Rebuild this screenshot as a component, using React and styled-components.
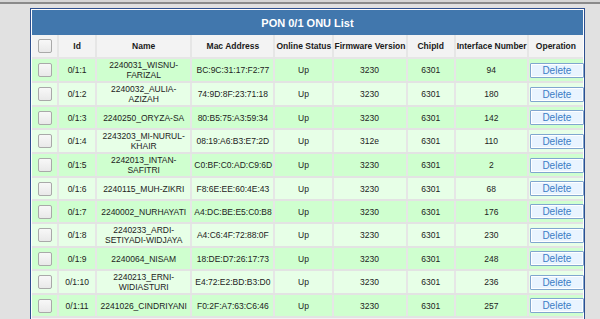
import React from "react"
import styled, { createGlobalStyle } from "styled-components"

const GlobalStyle = createGlobalStyle`
  html, body {
    margin: 0;
    padding: 0;
    background: #e1e1e1;
    font-family: "Liberation Sans", Arial, sans-serif;
    overflow: hidden;
  }
`

const onus = [
  ["0/1:1", "2240031_WISNU-FARIZAL", "BC:9C:31:17:F2:77", "3230", "94"],
  ["0/1:2", "2240032_AULIA-AZIZAH", "74:9D:8F:23:71:18", "3230", "180"],
  ["0/1:3", "2240250_ORYZA-SA", "80:B5:75:A3:59:34", "3230", "142"],
  ["0/1:4", "2243203_MI-NURUL-KHAIR", "08:19:A6:B3:E7:2D", "312e", "110"],
  ["0/1:5", "2242013_INTAN-SAFITRI", "C0:BF:C0:AD:C9:6D", "3230", "2"],
  ["0/1:6", "2240115_MUH-ZIKRI", "F8:6E:EE:60:4E:43", "3230", "68"],
  ["0/1:7", "2240002_NURHAYATI", "A4:DC:BE:E5:C0:B8", "3230", "176"],
  ["0/1:8", "2240233_ARDI-SETIYADI-WIDJAYA", "A4:C6:4F:72:88:0F", "3230", "230"],
  ["0/1:9", "2240064_NISAM", "18:DE:D7:26:17:73", "3230", "248"],
  ["0/1:10", "2240213_ERNI-WIDIASTURI", "E4:72:E2:BD:B3:D0", "3230", "236"],
  ["0/1:11", "2241026_CINDRIYANI", "F0:2F:A7:63:C6:46", "3230", "257"],
]

const widths = [26, 38, 95, 83, 58, 74, 48, 73, 55]
const headers = ["", "Id", "Name", "Mac Address", "Online Status", "Firmware Version", "ChipId", "Interface Number", "Operation"]

const App = () => {
  return (
    <>
      <GlobalStyle />
      <TopBar />
      <Panel>
        <Title>PON 0/1 ONU List</Title>
        <Table>
          <colgroup>
            {widths.map((w, i) => (
              <col key={i} style={{ width: w }} />
            ))}
          </colgroup>
          <thead>
            <tr>
              {headers.map((h, i) => (
                <Th key={i}>{i === 0 ? <Check type="checkbox" /> : h}</Th>
              ))}
            </tr>
          </thead>
          <tbody>
            {onus.map((o, idx) => (
              <Row key={o[0]} $odd={idx % 2 === 0}>
                <Td><Check type="checkbox" /></Td>
                <Td>{o[0]}</Td>
                <Td>{o[1]}</Td>
                <Td>{o[2]}</Td>
                <Td>Up</Td>
                <Td>{o[3]}</Td>
                <Td>6301</Td>
                <Td>{o[4]}</Td>
                <Td $op><DeleteButton>Delete</DeleteButton></Td>
              </Row>
            ))}
          </tbody>
        </Table>
        <Spacer />
      </Panel>
    </>
  )
}

export default App

const TopBar = styled.div`
  height: 2px;
  background: #d6d6d6;
  border-bottom: 2px solid #8a8a8a;
`

const Panel = styled.div`
  margin: 4px 0 0 30px;
  width: 551px;
  border: 1px solid #2d4f8f;
  padding: 1px;
  background: #ffffff;
`

const Title = styled.div`
  height: 25px;
  background: #4177ad;
  color: #ffffff;
  font-size: 11px;
  font-weight: bold;
  display: flex;
  align-items: center;
  justify-content: center;
`

const Table = styled.table`
  width: 551px;
  table-layout: fixed;
  border-collapse: collapse;
  font-size: 8.5px;
  color: #222;
`

const Th = styled.th`
  height: 20px;
  padding: 1px 1px;
  background: #f3f3f3;
  font-weight: bold;
  color: #1a1a1a;
  white-space: nowrap;
  overflow: visible;
  text-align: center;
  border-right: 2px solid #e6e6e6;
  border-bottom: 2px solid #e6e6e6;
  &:last-child {
    border-right: none;
  }
`

const Row = styled.tr`
  background: ${(p) => (p.$odd ? "#cfffcf" : "#e7ffe7")};
`

const Td = styled.td`
  height: 19px;
  padding: ${(p) => (p.$op ? "0 0 0 1px" : "1px 2px")};
  line-height: 10px;
  text-align: center;
  vertical-align: middle;
  border-right: 2px solid #e6e6e6;
  border-bottom: 2px solid #e3e3e3;
  &:last-child {
    border-right: none;
  }
`

const Spacer = styled.div`
  height: 24px;
  background: #f2f2f2;
`

const Check = styled.input`
  appearance: none;
  display: block;
  margin: 0 auto;
  width: 14px;
  height: 14px;
  border: 1px solid #a9a9a9;
  border-radius: 2px;
  background: linear-gradient(#f8f8f8, #e9e9e9);
  box-sizing: border-box;
`

const DeleteButton = styled.button`
  display: block;
  width: 54px;
  height: 15px;
  padding: 0;
  margin: 0;
  font-family: "Liberation Sans", Arial, sans-serif;
  font-size: 10px;
  line-height: 13px;
  color: #3b7cc4;
  background: #e9f4ff;
  border: 1px solid #80a6cf;
  box-shadow: inset 0 0 0 1px #ffffff;
  border-radius: 1px;
`
